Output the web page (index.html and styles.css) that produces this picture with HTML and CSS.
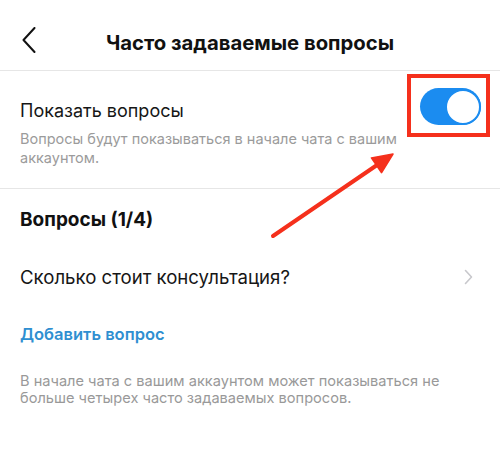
FILE: index.html
```html
<!DOCTYPE html>
<html lang="ru">
<head>
<meta charset="utf-8">
<link rel="stylesheet" href="styles.css">
</head>
<body>
<div class="page">
  <header class="topbar">
    <div class="back">
      <svg width="14" height="26" viewBox="0 0 14 26"><path d="M12.5 1 L1.5 13 L12.5 25" fill="none" stroke="#111" stroke-width="2" stroke-linecap="round" stroke-linejoin="round"/></svg>
    </div>
    <h1 class="title">Часто задаваемые вопросы</h1>
    <div class="spacer"></div>
  </header>

  <section class="toggle-section">
    <div class="toggle-text">
      <div class="row-title">Показать вопросы</div>
      <div class="row-desc">Вопросы будут показываться в начале чата с вашим аккаунтом.</div>
    </div>
    <div class="highlight">
      <div class="switch"><div class="knob"></div></div>
    </div>
  </section>

  <section class="questions">
    <h2 class="section-title">Вопросы (1/4)</h2>
    <div class="question-row">
      <span class="question">Сколько стоит консультация?</span>
      <svg class="chev" width="9" height="16" viewBox="0 0 9 16"><path d="M1.5 1.5 L7.5 8 L1.5 14.5" fill="none" stroke="#c8c8cc" stroke-width="1.6" stroke-linecap="round" stroke-linejoin="round"/></svg>
    </div>
    <div class="add">Добавить вопрос</div>
    <p class="note">В начале чата с вашим аккаунтом может показываться не больше четырех часто задаваемых вопросов.</p>
  </section>

  <svg class="arrow" width="500" height="476" viewBox="0 0 500 476">
    <line x1="273" y1="236" x2="380" y2="163" stroke="#f5301c" stroke-width="4" stroke-linecap="round"/>
    <polygon points="393,154 381.6,172.7 371.4,157.9" fill="#f5301c" stroke="#f5301c" stroke-width="1.5" stroke-linejoin="round"/>
  </svg>
</div>
</body>
</html>
```

FILE: styles.css
```css
* { box-sizing: border-box; }
html, body { margin: 0; padding: 0; background: #fff; }
body {
  font-family: Inter, "Liberation Sans", Arial, sans-serif;
  color: #111;
  width: 500px;
  height: 476px;
  overflow: hidden;
}
.page { position: relative; width: 500px; height: 476px; }

.topbar {
  height: 71px;
  display: grid;
  grid-template-columns: 1fr auto 1fr;
  align-items: center;
  padding-top: 9px;
  border-bottom: 1px solid #e6e6e6;
}
.back { padding-left: 22px; display: flex; }
.title {
  margin: 0;
  padding-top: 6px;
  font-size: 20.3px;
  font-weight: 700;
  color: #111;
}

.toggle-section {
  display: flex;
  justify-content: space-between;
  align-items: flex-start;
  height: 118px;
  border-bottom: 1px solid #e6e6e6;
}
.toggle-text { padding: 29px 0 0 20px; width: 400px; }
.row-title { font-size: 18px; line-height: 22px; color: #161616; }
.row-desc { margin-top: 7px; font-size: 14.5px; line-height: 19px; color: #9b9b9b; }

.highlight {
  margin: 3px 10px 0 0;
  border: 4px solid #f5301c;
  padding: 10px 5px 8px 9px;
}
.switch {
  width: 61px;
  height: 37px;
  border-radius: 19px;
  background: #1b8cf0;
  display: flex;
  justify-content: flex-end;
  align-items: center;
}
.knob {
  width: 36px;
  height: 36px;
  border-radius: 50%;
  background: #fff;
  border: 2px solid #1b8cf0;
}

.questions { padding: 0 20px; }
.section-title {
  margin: 0;
  padding-top: 20px;
  font-size: 19px;
  line-height: 22px;
  font-weight: 700;
}
.question-row {
  display: flex;
  justify-content: space-between;
  align-items: center;
  margin-top: 35px;
  padding-right: 7px;
}
.question { font-size: 18.6px; line-height: 22px; color: #161616; }
.add {
  margin-top: 35px;
  font-size: 16.5px;
  line-height: 22px;
  font-weight: 600;
  color: #2f8fd1;
}
.note {
  margin: 28px 0 0;
  font-size: 14.6px;
  line-height: 17px;
  color: #999;
}

.arrow { position: absolute; top: 0; left: 0; pointer-events: none; }
```
